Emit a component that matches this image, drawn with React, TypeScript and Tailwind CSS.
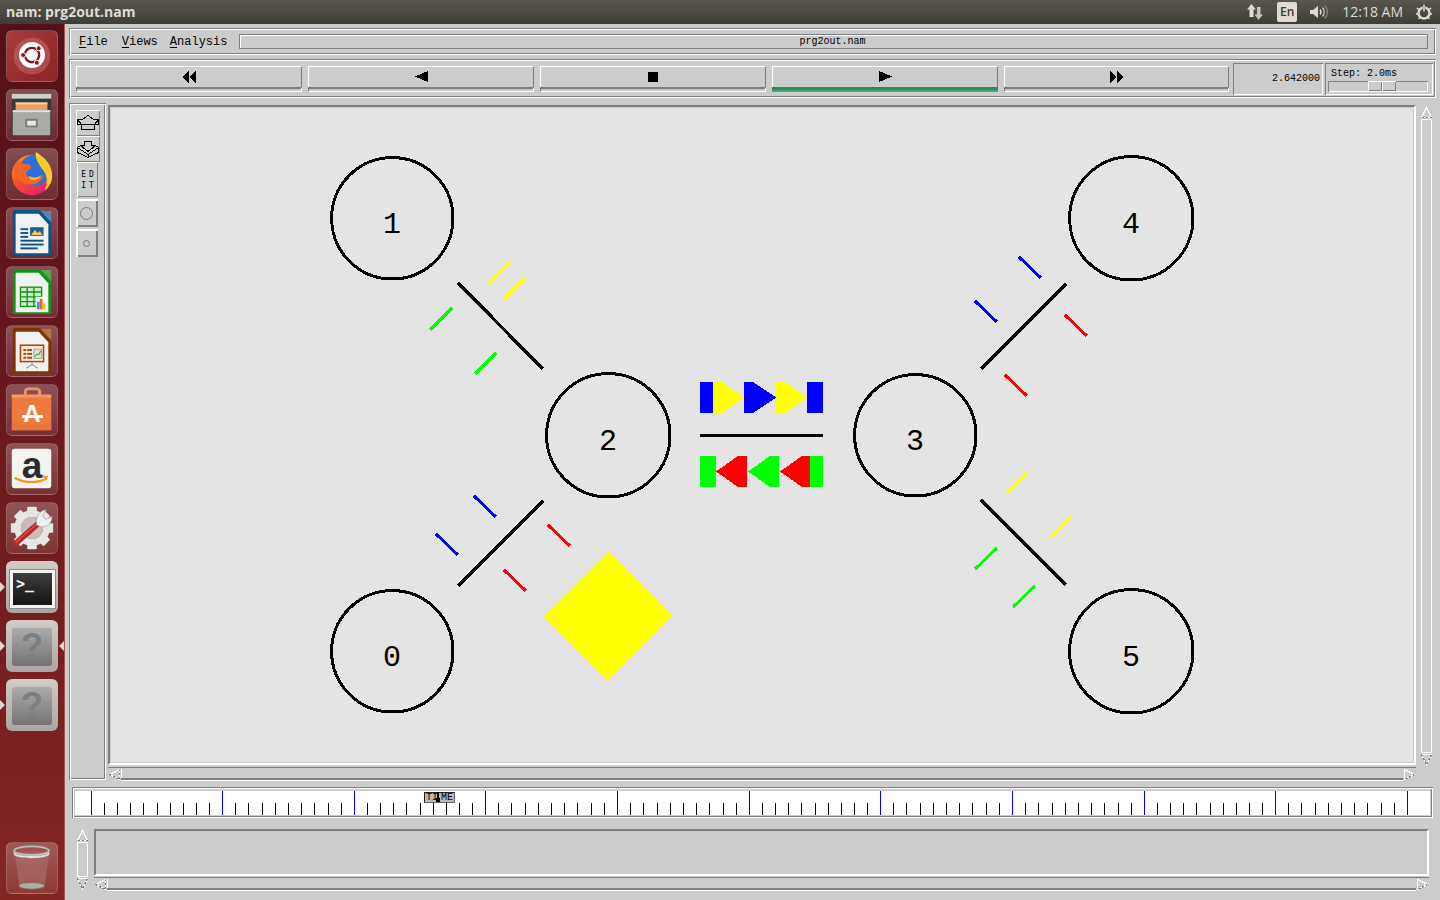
import React from 'react';

const groove = 'shadow-[inset_1px_1px_0_#7f7f7f,inset_-1px_-1px_0_#ffffff,inset_2px_2px_0_#ffffff,inset_-2px_-2px_0_#7f7f7f]';
const sunken = 'shadow-[inset_1px_1px_0_#7f7f7f,inset_-1px_-1px_0_#ffffff]';
const thinRaised = 'shadow-[inset_1px_1px_0_#ffffff,inset_-1px_-1px_0_#7f7f7f]';

const MONO = 'font-["Liberation_Mono","DejaVu_Sans_Mono",monospace]';

function Tile({ children, active, arrowL, arrowR }: { children: React.ReactNode; active?: boolean; arrowL?: boolean; arrowR?: boolean }) {
  return (
    <div className="relative h-[52px] w-[52px]">
      <div
        className={
          active
            ? 'h-full w-full rounded-[6px] bg-gradient-to-b from-[#d2ccc9] to-[#aba5a3]'
            : 'h-full w-full rounded-[6px] border border-white/15 bg-gradient-to-b from-white/25 to-white/10'
        }
      >
        {children}
      </div>
      {arrowL && <div className="absolute left-[-6px] top-[21px] h-0 w-0 border-y-[5px] border-l-[5px] border-y-transparent border-l-[#dcd6d3]" />}
      {arrowR && <div className="absolute right-[-6px] top-[21px] h-0 w-0 border-y-[5px] border-r-[5px] border-y-transparent border-r-[#dcd6d3]" />}
    </div>
  );
}

const docPath = 'M8 3h26l12 12v33a2 2 0 0 1-2 2H8a2 2 0 0 1-2-2V5a2 2 0 0 1 2-2z';

function DocIcon({ edge, corner, children }: { edge: string; corner: string; children: React.ReactNode }) {
  return (
    <svg viewBox="0 0 52 52" className="h-full w-full">
      <path d={docPath} fill={edge} transform="translate(0 -1)" />
      <path d="M35 3l11 12V4a1 1 0 0 0-1-1z" fill={corner} opacity="0.75" />
      <path d="M10 6h23l10 11v29a1 1 0 0 1-1 1H10a1 1 0 0 1-1-1V7a1 1 0 0 1 1-1z" fill="#f1f1ef" />
      {children}
    </svg>
  );
}

function Launcher() {
  return (
    <div className="flex h-full w-[65px] shrink-0 flex-col gap-[7px] border-r border-r-[#a85a50] bg-gradient-to-b from-[#561019] to-[#832524] pl-[6px] pt-[6px]">
      <Tile>
        <div className="h-full w-full rounded-[6px] bg-gradient-to-br from-[#a83a3c] to-[#8c2427]">
          <svg viewBox="0 0 52 52" className="h-full w-full">
            <circle cx="26" cy="26" r="19" fill="#c97a75" opacity="0.45" />
            <circle cx="26" cy="25" r="13.5" fill="#fff" />
            <circle cx="26" cy="25" r="7.5" fill="none" stroke="#7d1b1c" strokeWidth="2.4" />
            <circle cx="33" cy="18" r="2.6" fill="#7d1b1c" stroke="#fff" />
            <circle cx="16.8" cy="25" r="2.6" fill="#7d1b1c" stroke="#fff" />
            <circle cx="31" cy="33" r="2.6" fill="#7d1b1c" stroke="#fff" />
          </svg>
        </div>
      </Tile>
      <Tile>
        <svg viewBox="0 0 52 52" className="h-full w-full">
          <rect x="5" y="4" width="41" height="42" rx="2" fill="#3c3a38" />
          <rect x="5" y="4" width="41" height="5" fill="#cfcfcb" />
          <rect x="9" y="13" width="33" height="8" fill="#e9a05f" />
          <rect x="9" y="13" width="33" height="2" fill="#f3d3b0" />
          <rect x="6" y="21" width="39" height="26" rx="1" fill="#a9a9a6" />
          <rect x="6" y="21" width="39" height="2" fill="#e4e4e2" />
          <rect x="19" y="30" width="13" height="9" rx="1.5" fill="#7b7b78" />
          <rect x="21" y="32" width="9" height="5" fill="#e9e9e7" />
        </svg>
      </Tile>
      <Tile>
        <svg viewBox="0 0 52 52" className="h-full w-full">
          <defs>
            <linearGradient id="ffx" x1="0" y1="0" x2="0.6" y2="1">
              <stop offset="0" stopColor="#f9a51f" />
              <stop offset="0.55" stopColor="#f0522a" />
              <stop offset="1" stopColor="#e8246a" />
            </linearGradient>
          </defs>
          <circle cx="26" cy="27" r="21" fill="url(#ffx)" />
          <circle cx="29" cy="22" r="16" fill="#2c6fd8" />
          <path d="M30 3c10 6 17 14 17 25 0 6-3 12-8 15 4-8 3-17-3-23-3-5-7-10-6-17z" fill="#ffcb1f" />
          <path d="M8 17c2-3 4-5 6-5-1 2 0 3 2 3 4 0 8 1 9 3 1 3-3 4-5 6-1 3 2 5 5 6 5 1 10 0 13-3-1 6-8 11-15 10-9-1-15-8-16-17 0-1 0-2 1-3z" fill="#f26427" />
          <path d="M23 28c3 2 9 2 13-1-2 4-6 6-10 5-2 0-3-2-3-4z" fill="#ffb21f" />
        </svg>
      </Tile>
      <Tile>
        <DocIcon edge="#0b5487" corner="#4a9ac9">
          <rect x="24" y="20" width="14" height="9" fill="#1f5f8f" />
          <path d="M25 28l4-5 3 3 2-2 3 4z" fill="#f1c760" />
          <g fill="#0b5487">
            <rect x="14" y="21" width="8" height="2" /><rect x="14" y="25" width="8" height="2" /><rect x="14" y="29" width="8" height="2" />
            <rect x="14" y="33" width="24" height="2" /><rect x="14" y="37" width="24" height="2" /><rect x="14" y="41" width="18" height="2" />
          </g>
        </DocIcon>
      </Tile>
      <Tile>
        <DocIcon edge="#129414" corner="#4fc04f">
          <g stroke="#129414" strokeWidth="1.4" fill="#c8eec6">
            <rect x="14" y="21" width="22" height="20" />
            <path d="M14 26h22M14 31h22M14 36h22M21 21v20M28 21v20" fill="none" />
          </g>
          <rect x="30" y="31" width="11" height="13" fill="#fff" />
          <rect x="31" y="36" width="3" height="8" fill="#2f9ddb" /><rect x="34" y="33" width="3" height="11" fill="#e8632b" /><rect x="37" y="38" width="3" height="6" fill="#f2b921" />
        </DocIcon>
      </Tile>
      <Tile>
        <DocIcon edge="#7e3306" corner="#c9803d">
          <rect x="14" y="20" width="24" height="17" fill="#fbeadb" stroke="#a8480c" strokeWidth="1.6" />
          <g fill="#a8480c">
            <rect x="17" y="24" width="3" height="2" /><rect x="21" y="24" width="5" height="2" /><rect x="17" y="28" width="3" height="2" /><rect x="21" y="28" width="5" height="2" /><rect x="17" y="32" width="3" height="2" /><rect x="21" y="32" width="5" height="2" />
          </g>
          <rect x="28" y="24" width="8" height="10" fill="#d9e2cf" stroke="#777" strokeWidth="0.6" />
          <path d="M29 32l2-3 2 1 2-4" stroke="#3a8f3a" fill="none" />
          <path d="M26 37v3M26 40l-6 4M26 40l6 4" stroke="#999" strokeWidth="1.2" />
        </DocIcon>
      </Tile>
      <Tile>
        <div className="relative h-full w-full">
          <svg viewBox="0 0 52 52" className="h-full w-full">
            <path d="M19 11V7a3 3 0 0 1 3-3h9a3 3 0 0 1 3 3v4" fill="none" stroke="#e8956a" strokeWidth="3" />
            <rect x="5" y="10" width="41" height="37" fill="#ee7b3e" />
            <rect x="5" y="10" width="41" height="3" fill="#f19a68" />
            <rect x="5" y="40" width="41" height="7" fill="#e9743a" />
          </svg>
          <span className='absolute left-0 right-0 top-[15px] text-center font-["Liberation_Sans",sans-serif] text-[24px] font-bold leading-[28px] text-white'>A</span>
          <div className="absolute left-[15px] top-[30px] h-[3px] w-[21px] bg-white" />
        </div>
      </Tile>
      <Tile>
        <div className="relative h-full w-full">
          <svg viewBox="0 0 52 52" className="h-full w-full">
            <rect x="5" y="5" width="41" height="41" rx="3" fill="#f3f3f2" />
            <path d="M8 35c10 6 24 6 33 1" fill="none" stroke="#f59a12" strokeWidth="2.4" />
            <path d="M37 33l6 0-2 5z" fill="#f59a12" />
          </svg>
          <span className='absolute left-0 right-0 top-[3px] text-center font-["Liberation_Sans",sans-serif] text-[37px] font-bold leading-[38px] text-[#2b2b2b]'>a</span>
        </div>
      </Tile>
      <Tile>
        <svg viewBox="0 0 52 52" className="h-full w-full">
          <g transform="translate(26 26)" fill="#e6e6e4">
            {[0, 45, 90, 135, 180, 225, 270, 315].map((a) => (
              <rect key={a} x="-5" y="-22" width="10" height="10" rx="1" transform={`rotate(${a})`} />
            ))}
            <circle r="15" fill="none" stroke="#e6e6e4" strokeWidth="7" />
            <circle r="11.5" fill="#c9bcbc" />
          </g>
          <path d="M9 42L33 21" stroke="#b8282a" strokeWidth="6" strokeLinecap="round" />
          <path d="M9 41L33 20" stroke="#de5050" strokeWidth="1.4" />
          <path d="M31 23c-2-7 2-15 10-16l-4 6 3 4 7-3c0 8-8 14-16 9z" fill="#f0f0ee" stroke="#8f8f8f" strokeWidth="0.6" />
        </svg>
      </Tile>
      <Tile active arrowL>
        <div className="pl-[4px] pt-[9px]">
          <div className="relative h-[38px] w-[45px] border-[3px] border-[#f4f4f2] bg-gradient-to-b from-[#3f3f3f] to-[#141414] outline outline-1 outline-[#8a8a8a]">
            <span className={`absolute left-[3px] top-[3px] font-["DejaVu_Sans_Mono",monospace] text-[15px] font-bold leading-[17px] text-[#eeeeee]`}>&gt;_</span>
          </div>
        </div>
      </Tile>
      <Tile active arrowL arrowR>
        <Unknown />
      </Tile>
      <Tile active arrowL>
        <Unknown />
      </Tile>
      <div className="flex-1" />
      <div className="mb-[6px]">
        <Tile>
          <svg viewBox="0 0 52 52" className="h-full w-full">
            <path d="M8 10l5 36c1 3 25 3 26 0l5-36z" fill="#b07a78" opacity="0.5" />
            <ellipse cx="25.5" cy="44.5" rx="13" ry="3" fill="#a7b0a4" />
            <ellipse cx="25.5" cy="8" rx="18" ry="4.5" fill="none" stroke="#bdbdba" strokeWidth="2" />
            <path d="M7 9c2 6 35 6 37 0v3c-2 5-35 5-37 0z" fill="#dededc" />
          </svg>
        </Tile>
      </div>
    </div>
  );
}

function Unknown() {
  return (
    <div className="pl-[6px] pt-[7px]">
      <div className='flex h-[39px] w-[40px] items-center justify-center rounded-[3px] border-t border-t-[#c4c4c4] bg-gradient-to-b from-[#acacac] to-[#747474] font-["Liberation_Sans",sans-serif] text-[36px] font-bold leading-none text-[#7e7e7e]'>?</div>
    </div>
  );
}

function TopBar() {
  return (
    <div className='flex h-6 shrink-0 items-center bg-gradient-to-b from-[#59574f] to-[#3d3c37] pl-[6px] font-["Open_Sans",sans-serif] text-[#dfdbd2]'>
      <span className="text-[14px] font-bold leading-none">nam: prg2out.nam</span>
      <div className="ml-auto flex items-center">
        <svg viewBox="0 0 18 18" className="h-[18px] w-[18px]" fill="#dfdbd2">
          <path d="M5.5 1L10 6.5H7.5V14h-4V6.5H1z" />
          <path d="M12.5 17L8.5 11.5H11V4h3.5v7.5H17z" fill="#c8c4bb" />
        </svg>
        <div className="ml-[13px] flex h-[20px] w-[20px] items-center justify-center rounded-[2px] bg-[#dfdbd2] text-[12px] font-semibold text-[#3c3b37]">En</div>
        <svg viewBox="0 0 20 18" className="ml-[12px] h-[18px] w-[20px]" fill="none" stroke="#dfdbd2">
          <path d="M1 7h3l5-4v12l-5-4H1z" fill="#dfdbd2" stroke="none" />
          <path d="M11 6.5a4 4 0 0 1 0 5" strokeWidth="1.4" />
          <path d="M13.5 4.5a7 7 0 0 1 0 9" strokeWidth="1.2" />
          <path d="M16 2.5a10 10 0 0 1 0 13" strokeWidth="1.2" stroke="#8d8a83" />
        </svg>
        <span className="ml-[13px] text-[14px] leading-none">12:18 AM</span>
        <svg viewBox="0 0 18 18" className="ml-[12px] mr-[7px] h-[18px] w-[18px]" fill="none" stroke="#dfdbd2">
          <circle cx="9" cy="10" r="5.5" strokeWidth="2.4" />
          <path d="M9 1v8" strokeWidth="2.4" stroke="#3d3c37" />
          <path d="M9 1.5v7" strokeWidth="1.6" />
          <path d="M2 5l2 2M16 5l-2 2M1 11h2M15 11h2M3.5 16l1.5-1.5M14.5 16L13 14.5" strokeWidth="1.6" />
        </svg>
      </div>
    </div>
  );
}

function MenuLabel({ first, rest, className }: { first: string; rest: string; className?: string }) {
  return (
    <span className={`whitespace-pre ${className ?? ''}`}>
      <span className="underline underline-offset-2">{first}</span>
      {rest}
    </span>
  );
}

function MenuBar() {
  return (
    <div className={`flex h-[27px] w-[1367px] items-center ${groove} ${MONO} text-[12px] leading-none text-black`}>
      <div className="ml-[10px] flex w-[160px] pt-[1px]">
        <MenuLabel first="F" rest="ile" />
        <MenuLabel first="V" rest="iews" className="ml-[14px]" />
        <MenuLabel first="A" rest="nalysis" className="ml-[12px]" />
      </div>
      <div className="flex h-[15px] w-[1189px] items-center justify-center pr-[2px] pt-[1px] text-[10px] shadow-[inset_1px_1px_0_#7f7f7f,inset_-1px_-1px_0_#7f7f7f,inset_2px_2px_0_#ffffff]">prg2out.nam</div>
    </div>
  );
}

function TransportButton({ children, on, wide }: { children: React.ReactNode; on?: boolean; wide?: boolean }) {
  return (
    <div className={`flex h-[26px] flex-col ${wide ? 'w-[225px]' : 'w-[226px]'}`}>
      <div className="flex h-[21px] items-center justify-center border-l border-r border-t border-l-white border-r-[#7f7f7f] border-t-white">{children}</div>
      {on ? (
        <div className="h-[5px] border-b-2 border-t-2 border-b-[#4aa574] border-t-[#2e8b57] bg-[#2e8b57]" />
      ) : (
        <div className="h-[5px] border-b border-l border-r border-t-2 border-b-white border-l-[#7f7f7f] border-r-white border-t-[#7f7f7f]" />
      )}
    </div>
  );
}

function Transport() {
  const tri = 'h-[11px] w-[13px]';
  return (
    <div className={`mt-[4px] flex h-[39px] w-[1367px] items-center pl-[7px] ${groove}`}>
      <div className="flex gap-[6px]">
        <TransportButton>
          <svg viewBox="0 0 14 12" className="h-[12px] w-[14px]" shapeRendering="crispEdges"><path d="M0 6l7-6v12zM7 6l7-6v12z" /></svg>
        </TransportButton>
        <TransportButton>
          <svg viewBox="0 0 13 11" className={tri} shapeRendering="crispEdges"><path d="M0 5.5L13 0v11z" /></svg>
        </TransportButton>
        <TransportButton>
          <div className="h-[10px] w-[10px] bg-black" />
        </TransportButton>
        <TransportButton on>
          <svg viewBox="0 0 13 11" className={tri} shapeRendering="crispEdges"><path d="M13 5.5L0 0v11z" /></svg>
        </TransportButton>
        <TransportButton wide>
          <svg viewBox="0 0 14 12" className="h-[12px] w-[14px]" shapeRendering="crispEdges"><path d="M7 6L0 0v12zM14 6L7 0v12z" /></svg>
        </TransportButton>
      </div>
      <div className={`ml-[4px] flex h-[32px] w-[90px] items-center justify-end pr-[3px] ${sunken} ${MONO} text-[10px] leading-none`}>2.642000</div>
      <div className={`ml-[2px] h-[32px] w-[108px] pl-[6px] pt-[6px] ${sunken} ${MONO} text-[10px] leading-none`}>
        <div>Step: 2.0ms</div>
        <div className={`ml-[-3px] mt-[2px] flex h-[11px] w-[100px] justify-start bg-[#cccccc] pl-[40px] ${sunken}`}>
          <div className={`h-[10px] w-[14px] ${thinRaised}`} />
          <div className={`h-[10px] w-[14px] ${thinRaised}`} />
        </div>
      </div>
    </div>
  );
}

function ToolButton({ h, children, style }: { h: string; children: React.ReactNode; style: string }) {
  return <div className={`flex items-center justify-center ${h} ${style}`}>{children}</div>;
}

function Toolbar() {
  const lit = `w-[24px] ml-[7px] ${thinRaised}`;
  const btn = 'w-[22px] ml-[7px] pr-[1px] shadow-[inset_2px_2px_0_#ffffff,inset_-2px_-2px_0_#7f7f7f]';
  return (
    <div className={`flex h-full w-[37px] shrink-0 flex-col pt-[7px] ${groove}`}>
      <ToolButton h="h-[26px]" style={lit}>
        <svg viewBox="0 0 22 16" className="h-[16px] w-[22px]" fill="none" stroke="#000" strokeWidth="1" shapeRendering="crispEdges">
          <path d="M11 0.5L16.5 4.5H21.5V9.5H17.5V14.5H4.5V9.5H0.5V4.5H5.5Z" />
          <path d="M4.5 9.5H17.5" />
          <path d="M0.5 4.5L4.5 9.5M21.5 4.5L17.5 9.5" stroke="#000" />
        </svg>
      </ToolButton>
      <ToolButton h="h-[26px]" style={lit}>
        <svg viewBox="0 0 22 17" className="h-[17px] w-[22px]" fill="none" stroke="#000" strokeWidth="1" shapeRendering="crispEdges">
          <path d="M7.5 0.5H14.5V4.5H18.5L11 10.5L3.5 4.5H7.5Z" />
          <path d="M0.5 6.5V11.5L11 16.5L21.5 11.5V6.5L18 4.5M0.5 6.5L4 4.5" />
          <path d="M0.5 6.5L11 13.5L21.5 6.5M11 13.5V16.5" />
        </svg>
      </ToolButton>
      <ToolButton h="h-[35px]" style={`w-[21px] ml-[8px] ${thinRaised}`}>
        <div className='pl-[3px] text-center font-["DejaVu_Sans_Mono",monospace] text-[8px] leading-[11px] tracking-[3px]'>ED<br />IT</div>
      </ToolButton>
      <div className="h-[2px]" />
      <ToolButton h="h-[28px]" style={btn}>
        <div className="h-[13px] w-[13px] rounded-full border border-[#777]" />
      </ToolButton>
      <div className="h-[2px]" />
      <ToolButton h="h-[28px]" style={btn}>
        <div className="h-[7px] w-[7px] rounded-full border border-[#777]" />
      </ToolButton>
    </div>
  );
}

function Arrow({ dir }: { dir: 'up' | 'down' | 'left' | 'right' }) {
  const tri = {
    up: ['M1.5 11.5L6.5 1.5L11.5 11.5', 'M1.5 11.5H11.5'],
    down: ['M1.5 1.5H11.5', 'M1.5 1.5L6.5 11.5L11.5 1.5'],
    left: ['M11.5 1.5L1.5 6.5', 'M1.5 6.5L11.5 11.5V1.5'],
    right: ['M1.5 11.5V1.5L11.5 6.5', 'M11.5 6.5L1.5 11.5'],
  }[dir];
  return (
    <svg viewBox="0 0 13 13" className="h-[13px] w-[13px] shrink-0 bg-[#cccccc]" fill="none" shapeRendering="crispEdges">
      <path d={tri[0]} stroke="#ffffff" />
      <path d={tri[1]} stroke="#ffffff" />
      <path d={tri[1]} stroke="#7f7f7f" strokeDasharray="2 2" />
    </svg>
  );
}

function HScroll({ w }: { w: string }) {
  return (
    <div className={`flex h-[13px] items-center border-t border-t-[#7f7f7f] shadow-[0_1px_0_#ffffff] ${w}`}>
      <Arrow dir="left" />
      <div className="h-[11px] flex-1 border-b-2 border-b-[#7f7f7f] shadow-[inset_1px_0_0_#ffffff]" />
      <Arrow dir="right" />
    </div>
  );
}

function VScroll({ h }: { h: string }) {
  return (
    <div className={`flex w-[13px] flex-col items-center ${h}`}>
      <Arrow dir="up" />
      <div className="w-[11px] flex-1 shadow-[inset_1px_1px_0_#ffffff,inset_-1px_-1px_0_#ffffff]" />
      <Arrow dir="down" />
    </div>
  );
}

const nodes = [
  { n: '1', x: 392, y: 218, r: 61 },
  { n: '4', x: 1131, y: 218, r: 62 },
  { n: '2', x: 608, y: 435, r: 62 },
  { n: '3', x: 915, y: 435, r: 61 },
  { n: '0', x: 392, y: 651, r: 61 },
  { n: '5', x: 1131, y: 651, r: 62 },
];

const links = [
  [458, 283, 543, 369],
  [1066, 284, 981, 369],
  [458, 586, 543, 501],
  [981, 500, 1066, 585],
];

const dashes: [string, number, number, number, number][] = [
  ['#ffff00', 488, 284, 510, 262],
  ['#ffff00', 504, 299, 525, 278],
  ['#00ff00', 430, 330, 452, 308],
  ['#00ff00', 475, 374, 496, 353],
  ['#0000ff', 1019, 257, 1041, 278],
  ['#0000ff', 975, 301, 997, 322],
  ['#ff0000', 1065, 315, 1087, 336],
  ['#ff0000', 1005, 375, 1027, 396],
  ['#0000ff', 474, 496, 496, 517],
  ['#0000ff', 436, 534, 458, 555],
  ['#ff0000', 548, 525, 570, 546],
  ['#ff0000', 504, 570, 526, 591],
  ['#ffff00', 1006, 494, 1027, 473],
  ['#ffff00', 1050, 538, 1071, 517],
  ['#00ff00', 975, 569, 997, 548],
  ['#00ff00', 1013, 607, 1035, 586],
];

function Diagram() {
  return (
    <svg viewBox="111 108 1302 654" className="block h-[654px] w-[1302px]" shapeRendering="crispEdges">
      {nodes.map((c) => (
        <g key={c.n}>
          <circle cx={c.x + 0.3} cy={c.y + 0.3} r={c.r - 0.3} fill="none" stroke="#000" strokeWidth="3" />
          <text x={c.x} y={c.y + 15} textAnchor="middle" fontSize="30" fontFamily="'Liberation Mono', monospace">{c.n}</text>
        </g>
      ))}
      {links.map((l, i) => (
        <line key={i} x1={l[0]} y1={l[1]} x2={l[2]} y2={l[3]} stroke="#000" strokeWidth="3.4" />
      ))}
      <line x1="700" y1="435.5" x2="823" y2="435.5" stroke="#000" strokeWidth="3" />
      {dashes.map((d, i) => (
        <line key={i} x1={d[1]} y1={d[2]} x2={d[3]} y2={d[4]} stroke={d[0]} strokeWidth="3" />
      ))}
      <polygon points="608,551 672,616 608,680 543,616" fill="#ffff00" />
      <rect x="700" y="382" width="13" height="31" fill="#0000ff" />
      <polygon points="713,382 722,382 744,397.5 722,413 713,413" fill="#ffff00" />
      <polygon points="744,382 753,382 776,397.5 753,413 744,413" fill="#0000ff" />
      <polygon points="776,382 785,382 807,397.5 785,413 776,413" fill="#ffff00" />
      <rect x="807" y="382" width="16" height="31" fill="#0000ff" />
      <rect x="700" y="456" width="16" height="31" fill="#00ff00" />
      <polygon points="716,471.5 738,456 747,456 747,487 738,487" fill="#ff0000" />
      <polygon points="748,471.5 770,456 779,456 779,487 770,487" fill="#00ff00" />
      <polygon points="780,471.5 802,456 810,456 810,487 802,487" fill="#ff0000" />
      <rect x="810" y="456" width="13" height="31" fill="#00ff00" />
    </svg>
  );
}

const majors = [91, 222, 354, 485, 617, 749, 880, 1012, 1144, 1275, 1407];

function Timeline() {
  const minors: number[] = [];
  majors.slice(0, -1).forEach((m, i) => {
    const step = (majors[i + 1] - m) / 10;
    for (let k = 1; k < 10; k++) minors.push(Math.round(m + step * k));
  });
  return (
    <div className={`ml-[3px] mt-[7px] h-[31px] w-[1361px] p-[3px] pt-[4px] ${groove}`}>
      <div className="relative h-[24px] w-full overflow-hidden bg-white">
        <svg viewBox="75 791 1355 24" className="block h-[24px] w-full" shapeRendering="crispEdges">
          {majors.map((x) => (
            <line key={x} x1={x + 0.5} y1="791" x2={x + 0.5} y2="815" stroke="#0000ff" />
          ))}
          {minors.map((x) => (
            <line key={x} x1={x + 0.5} y1="803" x2={x + 0.5} y2="815" stroke="#000" />
          ))}
        </svg>
        <div className={`absolute left-[349px] top-[1px] flex h-[11px] w-[31px] items-center justify-between border border-[#222] border-b-[#666] border-r-[#666] bg-[#b8b8b8] px-[1px] ${MONO} text-[10px] leading-none text-black`}>
          <span>TI</span>
          <span>ME</span>
        </div>
        <div className="absolute left-[362px] top-[1px] h-[10px] w-[2px] bg-black" />
        <div className="absolute left-[361px] top-[7px] h-[4px] w-[4px] bg-black" />
      </div>
    </div>
  );
}

export default function App() {
  return (
    <div className="flex h-screen w-screen flex-col overflow-hidden bg-[#cccccc]">
      <TopBar />
      <div className="flex min-h-0 flex-1">
        <Launcher />
        <div className="flex flex-1 flex-col pl-[4px] pt-[4px]">
          <MenuBar />
          <Transport />
          <div className="mt-[5px] flex h-[677px]">
            <Toolbar />
            <div className="ml-[2px] mt-[2px] flex flex-col">
              <div className="flex">
                <div className="h-[660px] w-[1308px] border-2 border-b-white border-l-[#7f7f7f] border-r-white border-t-[#7f7f7f]">
                  <div className="h-full w-full border border-[#cccccc] bg-[#e4e4e4]">
                    <Diagram />
                  </div>
                </div>
                <div className="ml-[4px] pt-[1px]">
                  <VScroll h="h-[660px]" />
                </div>
              </div>
              <div className="mt-[1px]">
                <HScroll w="w-[1308px]" />
              </div>
            </div>
          </div>
          <Timeline />
          <div className="ml-[7px] mt-[11px] flex">
            <VScroll h="h-[61px]" />
            <div className="ml-[5px] flex flex-col">
              <div className="h-[47px] w-[1335px] border-2 border-b-white border-l-[#7f7f7f] border-r-white border-t-[#7f7f7f] bg-[#cccccc]" />
              <div className="mt-[1px]">
                <HScroll w="w-[1335px]" />
              </div>
            </div>
          </div>
        </div>
      </div>
    </div>
  );
}
